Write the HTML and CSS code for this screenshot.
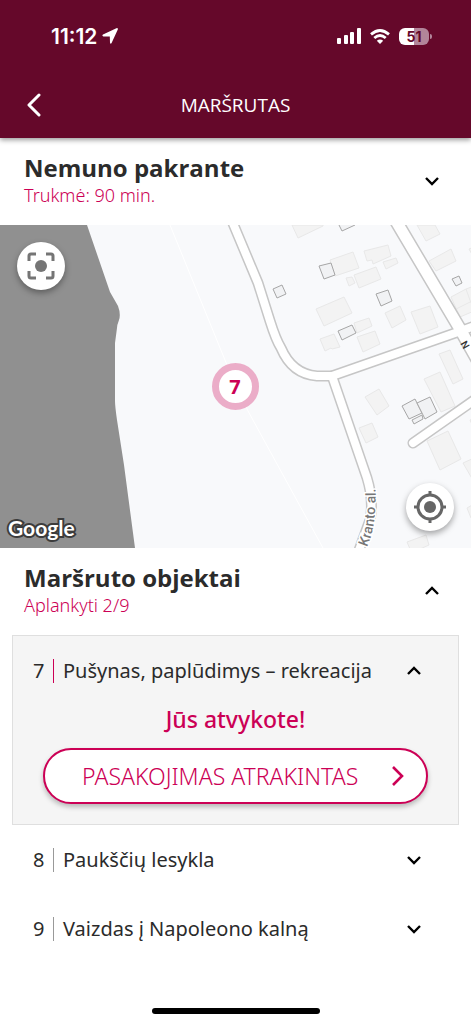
FILE: index.html
```html
<!DOCTYPE html>
<html lang="lt">
<head>
<meta charset="UTF-8">
<meta name="viewport" content="width=device-width, initial-scale=1.0">
<title>Maršrutas</title>
<link rel="stylesheet" href="styles.css">
</head>
<body>
  <header class="top">
    <div class="status">
      <span class="time">11:12
        <svg width="16" height="16" viewBox="0 0 16 16"><path d="M15.8 1.4 9.6 15Q8.6 16.6 8 14.8L7.8 8.6 1.4 8.4Q-.4 7.8 1 6.6L14.4.2Q16.2-.2 15.8 1.4Z" fill="#fff"/></svg>
      </span>
      <span class="signals">
        <svg width="24" height="16" viewBox="0 0 24 16" fill="#fff">
          <rect x="0" y="10" width="4" height="6" rx="1"/>
          <rect x="7" y="7" width="4" height="9" rx="1"/>
          <rect x="13" y="4" width="4" height="12" rx="1"/>
          <rect x="20" y="0" width="4" height="16" rx="1"/>
        </svg>
        <svg width="20" height="15" viewBox="0 0 20 15" fill="none" stroke="#fff" stroke-width="2.8">
          <path d="M1 5.4Q10-2.4 19 5.4"/>
          <path d="M4.3 9Q10 4 15.7 9"/>
          <path d="M10 15 6.8 11.8Q10 9.2 13.2 11.8Z" fill="#fff" stroke="none"/>
        </svg>
        <span class="battery">51</span>
      </span>
    </div>
    <nav class="bar">
      <button class="back" aria-label="Atgal">
        <svg width="14" height="24" viewBox="0 0 14 24"><path d="M12 2 2 12l10 10" fill="none" stroke="#fff" stroke-width="3" stroke-linecap="round" stroke-linejoin="round"/></svg>
      </button>
      <h1>MARŠRUTAS</h1>
    </nav>
  </header>

  <main>
    <section class="panel">
      <div>
        <h2>Nemuno pakrante</h2>
        <p>Trukmė: 90 min.</p>
      </div>
      <button class="toggle" aria-label="Išskleisti">
        <svg width="16" height="10" viewBox="0 0 16 10"><path d="m2 2 6 6 6-6"/></svg>
      </button>
    </section>

    <div class="map">
      <svg class="streets" viewBox="0 0 471 323" preserveAspectRatio="xMidYMid slice">
        <path class="water" d="M-200 0H87L110 67 118 81Q121 89 119 95 117 100 117 103L115 118V176Q115 181 117 195L124 240 135 323H-200Z"/>
        <path class="trail" d="M170 0 227 140 248 186 323 323"/>
        <g class="houses">
          <path d="M292 0 298 13 323 1V0Z"/>
          <path d="M330 35 353 27 359 43 335 51Z"/>
          <path d="M364 26 388 20 391 31 373 39 372 35 367 36Z"/>
          <path d="M383 37 396 33 398 38 386 44Z"/>
          <path d="M346 53 352 52 355 58 349 61Z"/>
          <path d="M354 50 376 42 381 54 359 63Z"/>
          <path d="M316 84 344 72 352 88 324 101Z"/>
          <path d="M385 88 400 81 406 95 392 103Z"/>
          <path d="M411 87 430 81 438 102 420 109Z"/>
          <path d="M354 98 369 93 372 101 357 108Z"/>
          <path d="M357 112 375 106 380 119 363 127Z"/>
          <path d="M320 114 334 109 340 122 332 124 331 123 325 126Z"/>
          <path d="M417 0H435L440 9 426 16Z"/>
          <path d="M429 36 451 24 456 36 436 46Z"/>
          <path d="M451 72 466 64 474 61V86L460 92ZM466 64 471 78M456 84 474 75"/>
          <path d="M439 129 450 125 463 154 453 159Z"/>
          <path d="M424 154 440 147 455 181 441 187Z"/>
          <path d="M365 172 379 164 389 181 377 190Z"/>
          <path d="M359 203 372 198 378 212 366 218Z"/>
          <path d="M427 216 448 206 461 234 440 245Z"/>
          <path d="M463 238 474 233V257Z"/>
          <path d="M467 283 474 279V293H471Z"/>
          <path d="M407 317 426 310 429 320 420 324H410Z"/>
          <path d="M469 24 474 22V33Z"/>
          <path d="M470 195 474 193V204Z"/>
        </g>
        <g class="houses outlined">
          <path d="M339 0 342 6 355 0"/>
          <path d="M319 41 331 38 335 50 324 54Z"/>
          <path d="M273 64 282 60 286 69 277 73Z"/>
          <path d="M376 69 388 65 392 76 381 81Z"/>
          <path d="M338 106 352 100 356 108 342 115Z"/>
          <path d="M452 54 459 51 462 58 456 61Z"/>
          <path d="M412 195 422 190 423 194 414 199Z"/>
          <path d="M402 181 415 174 422 188 409 194Z"/>
          <path d="M417 178 430 172 437 187 425 194Z"/>
        </g>
        <g class="edges">
          <path d="M232-4 258 58 270 96Q276 115 281 123 292 149 317 151H332L458 107 480 99"/>
          <path d="M332 151 367 253Q374 276 370 295L358 328"/>
          <path d="M413 218 480 171"/>
          <path class="wide" d="M396-4 460 104 478 136"/>
        </g>
        <g class="roads">
          <path d="M232-4 258 58 270 96Q276 115 281 123 292 149 317 151H332L458 107 480 99"/>
          <path d="M332 151 367 253Q374 276 370 295L358 328"/>
          <path d="M413 218 480 171"/>
          <path class="wide" d="M396-4 460 104 478 136"/>
        </g>
        <path id="kranto" d="M367 322Q378 298 375 253" fill="none"/>
        <text class="street"><textPath href="#kranto">Kranto al.</textPath></text>
      </svg>
      <button class="round scan" aria-label="Rodyti visą maršrutą">
        <svg width="28" height="28" viewBox="0 0 28 28"><circle cx="14" cy="14" r="6" fill="#757575"/><path d="M2 9V4Q2 2 4 2H9M19 2H24Q26 2 26 4V9M26 19V24Q26 26 24 26H19M9 26H4Q2 26 2 24V19" fill="none" stroke="#757575" stroke-width="3"/></svg>
      </button>
      <button class="pin">7</button>
      <button class="round locate" aria-label="Mano vieta">
        <svg width="34" height="34" viewBox="0 0 34 34"><circle cx="17" cy="17" r="6" fill="#666"/><circle cx="17" cy="17" r="12" fill="none" stroke="#666" stroke-width="3"/><path d="M17 1V5M17 29V33M1 17H5M29 17H33" stroke="#666" stroke-width="3"/></svg>
      </button>
      <span class="side-street">N</span>
      <span class="google">Google</span>
    </div>

    <section class="panel">
      <div>
        <h2>Maršruto objektai</h2>
        <p>Aplankyti 2/9</p>
      </div>
      <button class="toggle" aria-label="Suskleisti">
        <svg width="16" height="10" viewBox="0 0 16 10"><path d="m2 8 6-6 6 6"/></svg>
      </button>
    </section>

    <ul class="objects">
      <li class="open">
        <button class="row">
          <span class="num">7</span>
          <span class="name">Pušynas, paplūdimys – rekreacija</span>
          <svg width="16" height="10" viewBox="0 0 16 10"><path d="m2 8 6-6 6 6"/></svg>
        </button>
        <p class="arrived">Jūs atvykote!</p>
        <button class="story">
          <span>PASAKOJIMAS ATRAKINTAS</span>
          <svg width="12" height="20" viewBox="0 0 12 20"><path d="m1 1 9 9-9 9" fill="none" stroke="#cc0055" stroke-width="2.6"/></svg>
        </button>
      </li>
      <li>
        <button class="row">
          <span class="num">8</span>
          <span class="name">Paukščių lesykla</span>
          <svg width="16" height="10" viewBox="0 0 16 10"><path d="m2 2 6 6 6-6"/></svg>
        </button>
      </li>
      <li>
        <button class="row">
          <span class="num">9</span>
          <span class="name">Vaizdas į Napoleono kalną</span>
          <svg width="16" height="10" viewBox="0 0 16 10"><path d="m2 2 6 6 6-6"/></svg>
        </button>
      </li>
    </ul>
  </main>
  <div class="home"></div>
</body>
</html>
```
FILE: styles.css
```css
* {
  box-sizing: border-box;
}
body {
  margin: 0;
  min-height: 100vh;
  display: flex;
  flex-direction: column;
  background: #fff;
  color: #2b2b2b;
  font-family: "Noto Sans", "Open Sans", sans-serif;
}
h1, h2, p, ul {
  margin: 0;
  padding: 0;
}
button {
  padding: 0;
  border: 0;
  background: none;
  color: inherit;
  font-family: inherit;
  cursor: pointer;
}
svg {
  display: block;
}

/* header */
.top {
  position: relative;
  z-index: 1;
  background: #65082a;
  color: #fff;
  box-shadow: 0 2px 5px rgba(0, 0, 0, 0.4);
}
.status {
  display: flex;
  justify-content: space-between;
  align-items: center;
  height: 72px;
  padding: 0 39px 0 51px;
}
.time {
  display: flex;
  align-items: center;
  gap: 5px;
  font: 600 21px "Inter", sans-serif;
}
.signals {
  display: flex;
  align-items: center;
  gap: 9px;
}
.battery {
  position: relative;
  width: 30px;
  height: 17px;
  margin-right: 3px;
  border-radius: 6px;
  background: linear-gradient(90deg, #fff 51%, #b2859a 51%);
  color: #65082a;
  font: 700 14px/17px "Inter", sans-serif;
  text-align: center;
}
.battery::after {
  content: "";
  position: absolute;
  left: 31px;
  top: 6px;
  width: 2px;
  height: 5px;
  border-radius: 0 2px 2px 0;
  background: #b2859a;
}
.bar {
  display: grid;
  grid-template-columns: 44px 1fr 44px;
  align-items: center;
  height: 66px;
  padding: 0 12px;
}
.back {
  display: flex;
  justify-content: center;
}
.bar h1 {
  font-family: "Open Sans", sans-serif;
  font-size: 19px;
  font-weight: 400;
  text-align: center;
}

/* collapsible panels */
.panel {
  display: flex;
  justify-content: space-between;
  align-items: center;
  padding: 16px 31px 17px 24px;
}
.panel h2 {
  font-family: "Open Sans", sans-serif;
  font-size: 24px;
  font-weight: 700;
  line-height: 28px;
}
.panel p {
  color: #cc0055;
  font-size: 18px;
  font-weight: 300;
  line-height: 26px;
}
.toggle path, .row path {
  fill: none;
  stroke: #000;
  stroke-width: 2.4;
}

/* map */
.map {
  position: relative;
  height: 323px;
  overflow: hidden;
  background: #f8f9fb;
}
.streets {
  width: 100%;
  height: 100%;
}
.water {
  fill: #909090;
}
.trail {
  fill: none;
  stroke: #fff;
  stroke-width: 1;
}
.houses {
  fill: #f3f3f3;
  stroke: #e8e8e8;
  stroke-width: 1;
}
.outlined {
  fill: #f1f2f4;
  stroke: #a6a6a6;
}
.edges, .roads {
  fill: none;
  stroke-linecap: round;
  stroke-linejoin: round;
}
.edges {
  stroke: #c6c6c6;
  stroke-width: 11;
}
.roads {
  stroke: #fff;
  stroke-width: 8;
}
.edges .wide {
  stroke-width: 14;
}
.roads .wide {
  stroke-width: 11;
}
.street {
  fill: #777;
  stroke: #fff;
  stroke-width: 3;
  paint-order: stroke;
  font: 500 14px "Roboto", sans-serif;
}
.side-street {
  position: absolute;
  right: 3px;
  top: 115px;
  color: #333;
  font: 500 10px/10px "Roboto", sans-serif;
  transform: rotate(60deg);
}
.round {
  position: absolute;
  display: flex;
  align-items: center;
  justify-content: center;
  width: 48px;
  height: 48px;
  border-radius: 50%;
  background: #fff;
  box-shadow: 0 3px 6px rgba(0, 0, 0, 0.35);
}
.scan {
  left: 17px;
  top: 17px;
}
.locate {
  right: 17px;
  bottom: 17px;
}
.pin {
  position: absolute;
  left: 50%;
  top: 50%;
  width: 47px;
  height: 47px;
  margin: -24px;
  border: 7px solid #ebadc8;
  border-radius: 50%;
  background: #fff;
  color: #cc0055;
  font-size: 20px;
  font-weight: 700;
}
.google {
  position: absolute;
  left: 8px;
  bottom: 6px;
  color: #fff;
  font: 700 21px/28px "Lato", sans-serif;
  -webkit-text-stroke: 4px #3c3c3c;
  paint-order: stroke fill;
}

/* route objects */
.objects {
  padding: 0 12px;
  list-style: none;
}
.objects li {
  border: 1px solid transparent;
  border-width: 0 1px;
}
.objects .open {
  padding-bottom: 20px;
  border-color: #dfdfdf;
  border-width: 1px;
  background: #f5f5f5;
}
.row {
  display: flex;
  align-items: center;
  width: 100%;
  height: 69px;
  padding: 0 36px 0 20px;
  font-size: 20px;
  font-weight: 400;
  text-align: left;
}
.num {
  width: 21px;
  border-right: 1px solid #999;
  line-height: 24px;
}
.open .num {
  border-color: #cc0055;
}
.name {
  flex: 1;
  padding-left: 9px;
  line-height: 24px;
  white-space: nowrap;
}
.arrived {
  color: #cc0055;
  font-size: 23px;
  font-weight: 500;
  line-height: 28px;
  text-align: center;
}
.story {
  display: flex;
  align-items: center;
  justify-content: space-between;
  width: calc(100% - 60px);
  height: 56px;
  margin: 15px 30px 0;
  padding: 0 22px 0 37px;
  border: 2px solid #cc0055;
  border-radius: 28px;
  background: #fff;
  box-shadow: 0 3px 5px rgba(0, 0, 0, 0.25);
  color: #cc0055;
  font-size: 23px;
  font-weight: 300;
  line-height: 30px;
  white-space: nowrap;
}
.home {
  width: 168px;
  height: 6px;
  margin: auto auto 10px;
  border-radius: 3px;
  background: #000;
}
```
